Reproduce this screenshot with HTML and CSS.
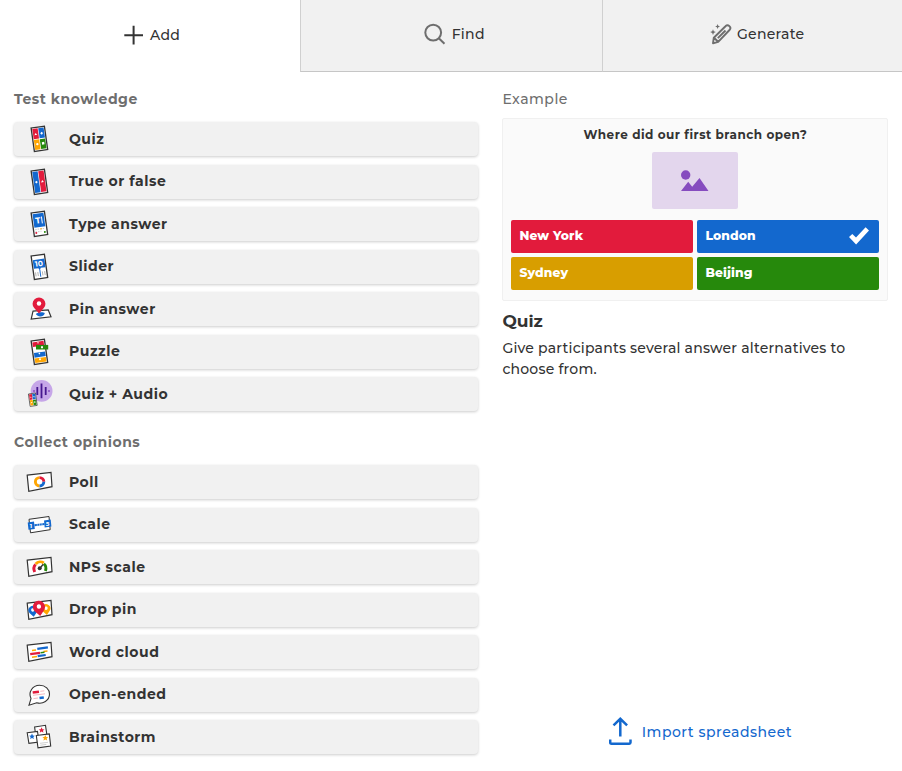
FILE: index.html
```html
<!DOCTYPE html>
<html lang="en">
<head>
<meta charset="utf-8">
<title>Add question</title>
<link rel="stylesheet" href="styles.css">
</head>
<body>
<svg class="defs" aria-hidden="true">
  <defs>
    <g id="phone"><rect x="-6.7" y="-11.8" width="13.4" height="23.6" fill="#fff" stroke="#333" stroke-width="1.3"/></g>
    <g id="quiz"><use href="#phone"/>
      <path d="M-5.7-10.7H-.3V-.4H-5.7z" fill="#e21b3c"/><path d="M.3-10.7H5.7V-.4H.3z" fill="#1368ce"/>
      <path d="M-5.7.4H-.3V10.4H-5.7z" fill="#ffa602"/><path d="M.3.4H5.7V10.4H.3z" fill="#26890c"/>
      <path d="M-3-6.4l1.4 2.200h-2.800zM3-6.700l1.400 1.500L3-3.700 1.600-5.200zM1.900 3.700h2.400V6.200H1.900z" fill="#fff"/><circle cx="-2.8" cy="5" r="1.2" fill="#fff"/>
    </g>
    <path id="slide" d="M1.200 7.200L25 4.300 26 18.700 2.800 23.400z" fill="#fff" stroke="#333" stroke-width="1.200"/>
    <path id="pin" d="M0 10L-4.800 4.600A6.400 6.400 0 1 1 4.800 4.600z"/>
    <path id="star" d="M0-2.900L.9-.9 2.900-.8 1.300.5 1.900 2.500 0 1.400-1.900 2.500-1.300.5-2.900-.8-.9-.9z"/>
  </defs>
</svg>
<div class="dialog">
  <nav class="tabs">
    <button class="tab tab-active">
      <svg class="tab-icon" width="22" height="22" viewBox="0 0 22 22"><path d="M11.600 1.700v18.700M2.300 11.200h18.700" stroke="#333" stroke-width="2"/></svg><span>Add</span>
    </button>
    <button class="tab tab-find">
      <svg class="tab-icon" width="22" height="22" viewBox="0 0 22 22" fill="none" stroke="#6e6e6e" stroke-width="2"><circle cx="9.200" cy="9.600" r="7.900"/><path d="M14.800 15.200l5.700 5.600"/></svg><span>Find</span>
    </button>
    <button class="tab tab-generate">
      <svg class="tab-icon" width="22" height="22" viewBox="0 0 22 22" fill="none" stroke="#6e6e6e" stroke-width="1.900" stroke-linejoin="round"><path d="M3 20.300l.8-5.600L15.500 3.200a2.700 2.700 0 0 1 4 3.800L8.200 18.900zM4 14.800l4.200 4M7.800 15.200l7.700-7.700"/><path d="M3 6.300l.8 2 2 .8-2 .8-.8 2-.8-2-2-.8 2-.8zM7.600 1.100l.7 1.700 1.700.7-1.700.7-.7 1.700-.7-1.700-1.700-.7 1.700-.7z" fill="#6e6e6e" stroke="none"/></svg><span>Generate</span>
    </button>
  </nav>
  <main class="content">
    <div class="types">
      <h2 class="heading">Test knowledge</h2>
      <ul class="list">
        <li class="item"><svg class="icon" viewBox="0 0 28 28"><use href="#quiz" transform="translate(13.400 13.800) rotate(-8)"/></svg><span>Quiz</span></li>
        <li class="item"><svg class="icon" viewBox="0 0 28 28"><g transform="translate(13.400 13.800) rotate(-8)"><use href="#phone"/><path d="M-5.700-10.700H-.3V10.400H-5.700z" fill="#1368ce"/><path d="M.3-10.700H5.700V10.400H.3z" fill="#e21b3c"/><path d="M-3-1.600L-1.600-.1-3 1.400-4.400-.1zM3-1.400L4.400.9H1.600z" fill="#fff"/></g></svg><span>True or false</span></li>
        <li class="item"><svg class="icon" viewBox="0 0 28 28"><g transform="translate(13.400 13.800) rotate(-8)"><use href="#phone"/><path d="M-5.500-10.300h11V3.200h-11z" fill="#1368ce"/><text class="glyph" x="-3.500" y="-.6" font-size="8.500" textLength="5">T</text><path d="M3-7v7" stroke="#fff"/><path d="M-5 5.200H5M-5 7.600H1" stroke="#ccc" stroke-dasharray="1.500 1"/><circle cx="-4.300" cy="8.600" r="1" fill="#e21b3c"/><circle cx="4.300" cy="8.800" r="1" fill="#26890c"/><circle cx="1" cy="5.200" r=".7" fill="#ffa602"/></g></svg><span>Type answer</span></li>
        <li class="item"><svg class="icon" viewBox="0 0 28 28"><g transform="translate(13.400 13.800) rotate(-8)"><use href="#phone"/><path d="M-5.700-7.500H6V1.200H1.200L0 3.400-1.200 1.200h-4.500z" fill="#1368ce"/><text class="glyph" x="-4" y="-.5" font-size="7.500" textLength="8" lengthAdjust="spacingAndGlyphs">10</text><path d="M-4.600 5v4M-2.300 5v4M2.300 5v4M4.600 5v4" stroke="#999" stroke-width=".7"/><path d="M0 3v7" stroke="#1368ce"/></g></svg><span>Slider</span></li>
        <li class="item"><svg class="icon" viewBox="0 0 28 28"><path d="M7 16.200L22.200 14.800 25 21.800 5.200 24z" fill="#fff" stroke="#333" stroke-width="1.200"/><path d="M9.800 19c2-2 7-2.500 9-1 0 3.300-6.500 5.200-9 1z" fill="#1368ce"/><g transform="translate(13 8.500)"><use href="#pin" fill="#e21b3c"/><circle r="2.200" fill="#fff"/></g></svg><span>Pin answer</span></li>
        <li class="item"><svg class="icon" viewBox="0 0 28 28"><g transform="translate(13.400 13.800) rotate(-8)"><use href="#phone"/><path d="M-5.700-10.300H5.600v4.700H-5.700z" fill="#e21b3c"/><path d="M-5.600.4H5.700v4.700H-5.600z" fill="#1368ce"/><path d="M-5.600 6H5.700v4.600H-5.600z" fill="#ffa602"/></g><path d="M10 6.900h12.200v4.600H10z" fill="#26890c"/><path d="M15 8.200h2v2h-2zM12 3.800l1 1.500h-2zM13.400 14.500l1 1-1 1-1-1z" fill="#fff"/><circle cx="14" cy="21.300" r="1" fill="#fff"/></svg><span>Puzzle</span></li>
        <li class="item"><svg class="icon" viewBox="0 0 28 28"><circle cx="15.600" cy="10.900" r="10.900" fill="#c6a6e8"/><path d="M15.500 3.500v14.800M11.300 7v8M19.700 7v8" stroke="#46178f" stroke-width="1.800"/><path d="M8 10v2M23 10v2" stroke="#864cbf" stroke-width="1.400"/><use href="#quiz" transform="translate(6.800 19.700) rotate(-8) scale(.53)"/></svg><span>Quiz + Audio</span></li>
      </ul>
      <h2 class="heading h-collect">Collect opinions</h2>
      <ul class="list">
        <li class="item"><svg class="icon" viewBox="0 0 28 28"><use href="#slide"/><g fill="none" stroke-width="2.900"><path d="M13.600 18A4.200 4.200 0 1 1 13.600 9.600" stroke="#ffa602"/><path d="M13.600 9.600A4.200 4.200 0 0 1 17.800 13.800" stroke="#e21b3c"/><path d="M17.800 13.800A4.200 4.200 0 0 1 13.600 18" stroke="#1368ce"/></g></svg><span>Poll</span></li>
        <li class="item"><svg class="icon" viewBox="0 0 28 28"><path d="M3 8.300L23 5.500 24.200 18.700 4.500 21.800z" fill="#fff" stroke="#333"/><path d="M1.700 11.500l6.300-.9.800 7.300-6.300.9zM18 9.400l6.700-.8.700 6.900-6.700.9z" fill="#1368ce"/><path d="M8.500 14.200l10-1.300" stroke="#1368ce" stroke-width="2"/><path d="M11.200 12.200v3M13.600 12v3M16 11.700v3" stroke="#fff" stroke-width=".5"/><text class="glyph" x="3.800" y="17" font-size="6">1</text><text class="glyph" x="19.700" y="14.700" font-size="6">5</text></svg><span>Scale</span></li>
        <li class="item"><svg class="icon" viewBox="0 0 28 28"><use href="#slide"/><g fill="none" stroke-width="2.900"><path d="M8.700 19C7.400 16 8 13 9.600 11.500" stroke="#e21b3c"/><path d="M9.700 11C12 8.300 15.500 8.300 17.700 10" stroke="#ffa602"/><path d="M17.900 10.800c2 1.500 2.500 4.200 1.500 7.200" stroke="#26890c"/></g><circle cx="13.700" cy="15.300" r="2" fill="#333"/><path d="M14 15.300l3.300-4.200" stroke="#333" stroke-width="1.400"/></svg><span>NPS scale</span></li>
        <li class="item"><svg class="icon" viewBox="0 0 28 28"><use href="#slide"/><g transform="translate(6.800 14) rotate(-8) scale(.68)"><use href="#pin" fill="#1368ce"/><circle r="2.500" fill="#fff"/></g><g transform="translate(20 12.200) rotate(-8) scale(.68)"><use href="#pin" fill="#ffa602"/><circle r="2.500" fill="#fff"/></g><g transform="translate(12.900 10.500) rotate(-8) scale(.95)"><use href="#pin" fill="#e21b3c"/><circle r="2.300" fill="#fff"/></g></svg><span>Drop pin</span></li>
        <li class="item"><svg class="icon" viewBox="0 0 28 28"><use href="#slide"/><g stroke-width="2.200"><path d="M11.300 10.900l10.600-1.500" stroke="#1368ce"/><path d="M6 12.600l4-.5M17.500 13.500l4-.5" stroke="#ffa602" stroke-width="1.500"/><path d="M4.200 16.200l9.800-1.300" stroke="#e21b3c"/><path d="M14.500 14.700l4-.5" stroke="#26890c" stroke-width="1.500"/><path d="M6 19.200l5-.7" stroke="#ffa602" stroke-width="1.500"/><path d="M11.700 18.200l8-1.200" stroke="#1368ce"/></g></svg><span>Word cloud</span></li>
        <li class="item"><svg class="icon" viewBox="0 0 28 28"><path d="M3 24.200l2-6.600C2 11 6.500 4.300 13.500 4.200c6 0 10 4 10 8.900 0 6.500-6.700 10.500-12.800 8.700z" fill="#fff" stroke="#333" stroke-width="1.100"/><path d="M6.700 11.500l6.300-.8" stroke="#e21b3c" stroke-width="2.500"/><path d="M13.500 17l4.300-.6" stroke="#1368ce" stroke-width="2.500"/><path d="M14.300 10.300l4-.5M7 14.300l12-1.500M7.500 17.600l4.500-.6" stroke="#f1a3af" stroke-width=".8"/></svg><span>Open-ended</span></li>
        <li class="item"><svg class="icon" viewBox="0 0 28 28"><g fill="#fff" stroke="#333" stroke-width="1.100"><path d="M8.600 4L19.500 2.300 21 12.800 10 14.300z"/><path d="M1.200 9.800L11.500 8.400 13 19 2.900 20.300z"/><path d="M10.300 12.500L23.300 10.900 24.700 23 12 24.800z"/></g><use href="#star" transform="translate(15.600 7.200)" fill="#e21b3c"/><use href="#star" transform="translate(6 13.500)" fill="#1368ce"/><use href="#star" transform="translate(19.300 15)" fill="#ffa602"/><path d="M14 20.300l8-1M14.300 22.200l6-.8" stroke="#bbb" stroke-width=".7"/></svg><span>Brainstorm</span></li>
      </ul>
    </div>
    <aside class="details">
      <h2 class="example">Example</h2>
      <div class="preview">
        <p class="question">Where did our first branch open?</p>
        <div class="media"><svg width="28" height="22" viewBox="0 0 28 22" fill="#864cbf"><circle cx="4.700" cy="5" r="4.700"/><path d="M0 21l7.200-9.300 4 5L18.500 8 27.500 21z"/></svg></div>
        <div class="answers">
          <div class="answer red"><span>New York</span></div>
          <div class="answer blue"><span>London</span><svg width="20" height="18" viewBox="0 0 20 18"><path d="M0 10.100L3.300 6.900 7 10.500 16.600.2 20 3.500 7.100 17.500z" fill="#fff"/></svg></div>
          <div class="answer yellow"><span>Sydney</span></div>
          <div class="answer green"><span>Beijing</span></div>
        </div>
      </div>
      <h3 class="title">Quiz</h3>
      <p class="description">Give participants several answer alternatives to choose from.</p>
      <button class="import"><svg width="24" height="28" viewBox="0 0 24 28" fill="none" stroke="#1368ce" stroke-width="2.500"><path d="M11.300 19.500V2M4.500 8.300L11.300 1.800l6.800 6.500"/><path d="M1.200 22.500v3a1.200 1.200 0 0 0 1.200 1.200h17.900a1.200 1.200 0 0 0 1.200-1.200v-3"/></svg><span>Import spreadsheet</span></button>
    </aside>
  </main>
</div>
</body>
</html>
```

FILE: styles.css
```css
* { box-sizing: border-box; }
body {
  margin: 0;
  background: #fff;
  color: #333;
  font-family: Montserrat, Inter, "Open Sans", sans-serif;
  font-size: 14px;
  overflow: hidden;
}
button { font: inherit; color: inherit; border: 0; padding: 0; background: none; }
h2, h3, p, ul { margin: 0; padding: 0; }
svg { flex: none; display: block; }
span { white-space: nowrap; }
.defs { position: absolute; width: 0; height: 0; }
.dialog { height: 771px; display: flex; flex-direction: column; }
.tabs { display: grid; grid-template-columns: 300px 302.400px 1fr; height: 72px; flex: none; }
.tab {
  display: flex;
  align-items: center;
  justify-content: center;
  gap: 6px;
  height: 72px;
  padding-bottom: 3px;
  background: #f1f1f1;
  border-left: 1px solid #d0d0d0;
  border-bottom: 1px solid #c6c6c6;
  font-weight: 500;
  letter-spacing: .3px;
}
.tab-active { background: #fff; border: 0; padding: 0 0 2px 2px; }
.tab-find { padding-left: 5px; gap: 6px; }
.tab-generate { padding-left: 9px; gap: 5px; }
.content { flex: 1; display: grid; grid-template-columns: 464px 386px; column-gap: 24.400px; padding: 17px 14px 0; }
.heading { height: 33px; font-size: 14px; line-height: 20px; font-weight: 700; letter-spacing: .52px; color: #6e6e6e; }
.list { list-style: none; display: flex; flex-direction: column; gap: 8.500px; }
.item {
  display: flex;
  align-items: center;
  height: 34px;
  padding-left: 12px;
  gap: 15px;
  background: #f1f1f1;
  border-radius: 4px;
  box-shadow: 0 1px 3px rgba(0, 0, 0, .2);
  font-weight: 700;
  letter-spacing: .52px;
}
.item span { padding-bottom: 1px; }
.h-collect { margin-top: 21px; }
.icon { width: 28px; height: 28px; }
.glyph { fill: #fff; font-weight: 700; letter-spacing: 0; }
.details { display: flex; flex-direction: column; height: 680px; }
.example { font-size: 14px; line-height: 20px; font-weight: 500; letter-spacing: .5px; color: #6e6e6e; }
.preview {
  display: flex;
  flex-direction: column;
  align-items: center;
  height: 183px;
  margin-top: 9px;
  padding: 8px 8px 0;
  background: #fafafa;
  border: 1px solid #f0f0f0;
  border-radius: 2px;
}
.question { font-size: 12px; line-height: 16px; font-weight: 700; letter-spacing: .48px; }
.media {
  display: flex;
  align-items: center;
  justify-content: center;
  width: 86px;
  height: 57px;
  margin-top: 9px;
  background: #e3d6ed;
  border-radius: 2px;
}
.answers { display: grid; grid-template-columns: 1fr 1fr; gap: 4px; width: 100%; margin-top: 11px; }
.answer {
  display: flex;
  align-items: center;
  justify-content: space-between;
  height: 33px;
  padding: 0 10px 1px 8px;
  border-radius: 2px;
  color: #fff;
  font-size: 12.300px;
  font-weight: 800;
  letter-spacing: .12px;
}
.answer span { padding-bottom: 1px; }
.red { background: #e21b3c; }
.blue { background: #1368ce; }
.yellow { background: #d89e00; }
.green { background: #26890c; }
.title { margin-top: 8px; font-size: 17px; line-height: 24px; font-weight: 700; letter-spacing: 0; }
.description { margin-top: 5px; font-size: 14px; line-height: 21px; font-weight: 500; letter-spacing: .21px; }
.import { display: flex; align-items: center; align-self: center; gap: 9px; margin: auto 0 24px 10px; color: #1368ce; font-weight: 500; letter-spacing: .52px; }
.import span { padding-top: 1px; }
```
